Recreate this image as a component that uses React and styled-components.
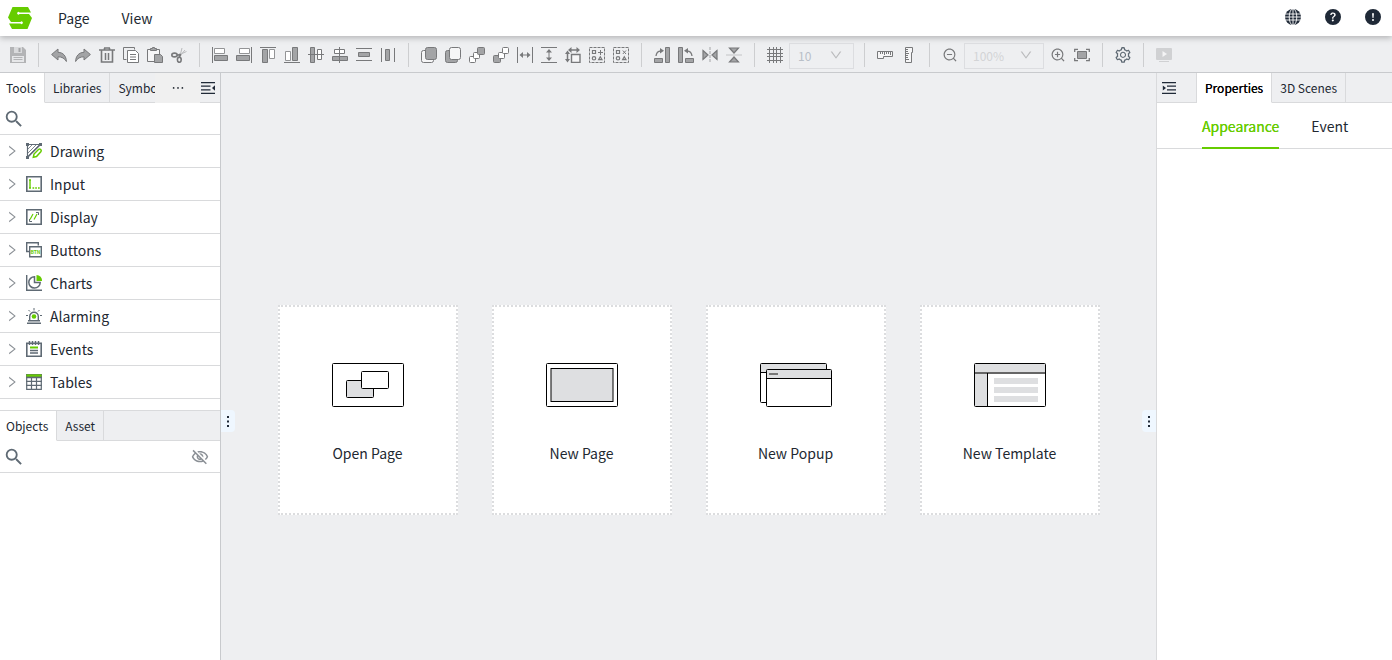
import React, { useState } from "react";
import styled, { createGlobalStyle } from "styled-components";
import {
  AiOutlineDown,
  AiOutlineEllipsis,
  AiOutlineRight,
  AiOutlineSetting,
  AiOutlineZoomIn,
  AiOutlineZoomOut
} from "react-icons/ai";
import { BsExclamationCircleFill, BsQuestionCircleFill } from "react-icons/bs";
import { MdOutlineVisibilityOff, MdSearch } from "react-icons/md";

const color = {
  green: "#6c0",
  panel: "#eeeff1",
  line: "#d9dadc",
  edge: "#c8cacd",
  navy: "#1f2937",
  text: "#222831",
  stroke: "#78797b",
  fill: "#a3a4a6",
  slate: "#5f6a74"
};

const GlobalStyle = createGlobalStyle`
  * {
    box-sizing: border-box;
  }
  html, body, #root {
    height: 100%;
  }
  body {
    margin: 0;
    overflow: hidden;
  }
  body, button, input, select {
    font-family: "Noto Sans CJK SC", "Noto Sans", sans-serif;
    font-weight: 400;
    color: ${color.text};
  }
  svg {
    display: block;
    flex: none;
  }
`;

const Page = styled.div`
  display: flex;
  flex-direction: column;
  height: 100%;
  background: ${color.panel};
`;

const Header = styled.header`
  position: relative;
  display: flex;
  align-items: center;
  flex: none;
  height: 36px;
  padding: 0 8px;
  background: #fff;
  box-shadow: 0 2px 6px rgba(0, 0, 0, 0.25);
`;

const Menu = styled.nav`
  display: flex;
  flex: 1;
  margin-left: 10px;
`;

const MenuButton = styled.button`
  padding: 0 16px;
  border: 0;
  background: none;
  font-size: 14px;
  line-height: 36px;
`;

const HeaderLinks = styled.div`
  display: flex;
  gap: 16px;
  padding-bottom: 2px;
  margin-right: -1px;
`;

const IconButton = styled.button`
  display: flex;
  align-items: center;
  justify-content: center;
  flex: none;
  width: 24px;
  height: 24px;
  padding: 0;
  border: 0;
  background: none;
  color: ${(p) => p.$color || color.stroke};
`;

const Toolbar = styled.div`
  display: flex;
  align-items: center;
  flex: none;
  height: 37px;
  padding: 2px 6px 0;
  border-bottom: 1px solid ${color.edge};
`;

const Separator = styled.span`
  width: 1px;
  height: 24px;
  margin: 0 8px;
  background: #cdced0;
`;

const SelectBox = styled.div`
  position: relative;
  width: ${(p) => p.$width}px;
  height: 26px;
  margin: 0 2px;

  select {
    width: 100%;
    height: 100%;
    padding: 0 28px 0 8px;
    border: 1px solid #dcdde0;
    background: transparent;
    color: ${(p) => p.$color};
    font-size: 12px;
    opacity: 1;
    appearance: none;
  }
  svg {
    position: absolute;
    top: 6px;
    right: 11px;
    color: #b9babc;
    pointer-events: none;
  }
`;

const Body = styled.div`
  display: flex;
  flex: 1;
  min-height: 0;
`;

const LeftPanel = styled.aside`
  flex: none;
  width: 221px;
  border-right: 1px solid ${color.edge};
  background: #fff;
`;

const RightPanel = styled.aside`
  flex: none;
  width: 236px;
  border-left: 1px solid ${color.line};
  background: #fff;
`;

const TabBar = styled.div`
  display: flex;
  height: ${(p) => (p.$topLine ? 31 : 30)}px;
  border-top: ${(p) => (p.$topLine ? `1px solid ${color.line}` : "0")};
  background: ${color.panel};
`;

const TabStrip = styled.div`
  display: flex;
  flex: 1;
  min-width: 0;
  overflow: hidden;
  box-shadow: inset 0 -1px ${color.line};
`;

const Tab = styled.button`
  flex: none;
  padding: 0 8px;
  border: 0;
  border-right: 1px solid ${color.line};
  border-bottom: 1px solid ${(p) => (p.$active ? "#fff" : color.line)};
  background: ${(p) => (p.$active ? "#fff" : color.panel)};
  color: ${(p) => (p.$active && p.$strong ? "#000" : color.text)};
  font-size: 12px;
  line-height: 28px;
  text-shadow: ${(p) => (p.$active && p.$strong ? "0 0 0 currentColor" : "none")};

  &:first-child {
    padding-left: ${(p) => (p.$strong ? 8 : 6)}px;
  }
`;

const MoreTabs = styled.button`
  display: flex;
  align-items: center;
  justify-content: center;
  width: 45px;
  border: 0;
  background: #f0f0f0;
`;

const FoldButton = styled.button`
  display: flex;
  align-items: center;
  width: ${(p) => p.$width}px;
  padding: 0 0 0 ${(p) => p.$indent || 0}px;
  border: 0;
  border-right: ${(p) => (p.$edge ? `1px solid ${color.line}` : "0")};
  border-bottom: 1px solid ${color.line};
  background: ${color.panel};
`;

const SearchRow = styled.label`
  display: flex;
  align-items: center;
  height: 32px;
  padding: 0 8px 0 3px;
  border-bottom: 1px solid ${color.line};

  input {
    flex: 1;
    min-width: 0;
    border: 0;
    outline: 0;
    background: none;
    font-size: 14px;
  }
`;

const ToolList = styled.ul`
  margin: 0 0 11px;
  padding: 0;
  list-style: none;
`;

const ToolRow = styled.li`
  border-bottom: 1px solid ${color.line};

  button {
    display: flex;
    align-items: center;
    width: 100%;
    height: 32px;
    padding: 0 5px;
    border: 0;
    background: none;
    font-size: 14px;
    text-align: left;
  }
  .arrow {
    color: #8b9096;
  }
  .icon {
    margin: 0 8px 0 7px;
  }
`;

const Workspace = styled.main`
  position: relative;
  display: flex;
  align-items: center;
  justify-content: center;
  flex: 1;
  gap: 34px;
  min-width: 0;
  padding-top: 86px;
`;

const Card = styled.button`
  display: flex;
  flex-direction: column;
  align-items: center;
  gap: 36px;
  width: 180px;
  height: 210px;
  padding: 56px 0 0;
  border: 2px dotted #dcdddf;
  background: #fff;
  font-size: 14px;
  line-height: 20px;
`;

const Handle = styled.button`
  position: absolute;
  top: 337px;
  ${(p) => p.$side}: 0;
  display: flex;
  align-items: center;
  justify-content: center;
  width: 14px;
  height: 22px;
  padding: 0;
  border: 0;
  border-radius: ${(p) => (p.$side === "left" ? "0 4px 4px 0" : "4px 0 0 4px")};
  background: #eff7ff;
`;

const SubTabs = styled.div`
  display: flex;
  gap: 32px;
  height: 46px;
  padding-left: 45px;
  border-bottom: 1px solid ${color.line};
`;

const SubTab = styled.button`
  height: 46px;
  padding: 2px 0 0;
  border: 0;
  border-bottom: 2px solid ${(p) => (p.$active ? color.green : "transparent")};
  background: none;
  color: ${(p) => (p.$active ? color.green : color.text)};
  font-size: 14px;
  text-shadow: ${(p) => (p.$active ? "0 0 0 currentColor" : "none")};
`;

const S = color.stroke;
const F = color.fill;

const Icon = ({ children, ...rest }) => (
  <svg width="16" height="16" viewBox="0 0 16 16" fill="none" stroke={S} {...rest}>
    {children}
  </svg>
);

const GroupShapes = ({ mark }) => (
  <>
    <rect x=".5" y=".5" width="15" height="15" strokeDasharray="3 1" />
    <path d="M3.5 3.5h3v3h-3z" strokeWidth="1.2" />
    <circle cx="5" cy="11.300" r="1.700" strokeWidth="1.2" />
    <path d="M11.300 9.700L13 12.700H9.600z" strokeWidth="1.2" />
    <path d={mark} />
  </>
);

const icons = {
  save: (
    <>
      <path d="M0 0h13l3 3v13H0z" fill="#b3b4b6" stroke="none" />
      <path d="M4 0h8v6H4z" fill="#d9dadc" stroke="none" />
      <path d="M8.500 1h2v4h-2z" fill="#a3a4a6" stroke="none" />
      <path d="M2 9h12v6H2z" fill="#e6e7e9" stroke="none" />
      <path d="M3.500 10.500h9M3.500 12.500h9" stroke="#b3b4b6" />
    </>
  ),
  undo: <path d="M.6 7.500L7 2v3.300c5.500.2 8.200 4 8.400 9.200C13.500 11.300 11 9.800 7 9.800V13z" fill={F} />,
  redo: <path d="M15.400 7.500L9 2v3.300C3.500 5.500.8 9.300.6 14.500 2.500 11.300 5 9.800 9 9.800V13z" fill={F} />,
  trash: (
    <>
      <path d="M0 3h16M5 1h6M5.500 1v2M10.500 1v2" strokeWidth="1.600" />
      <path d="M2.500 3v12h11V3" strokeWidth="1.600" />
      <path d="M6.500 6v7M9.500 6v7" strokeWidth="1.500" />
    </>
  ),
  copy: (
    <>
      <path d="M3.500 12.500h-3V.5h11v2" />
      <path d="M4.500 3.500h8l3 3v9h-11z" fill="#fff" />
      <path d="M7 7.500h6M7 10h6M7 12.500h6" />
    </>
  ),
  paste: (
    <>
      <path d="M7 14.500H.5v-12h12V7" fill="#f6f6f7" />
      <path d="M3.500 3.500v-2h2V.5h2v1h2v2z" fill={F} />
      <path d="M7.500 7.500h6l2 2v6h-8z" fill={F} />
    </>
  ),
  cut: (
    <>
      <ellipse cx="3.500" cy="8" rx="2.700" ry="1.900" strokeWidth="1.600" />
      <ellipse cx="8.300" cy="12.800" rx="1.900" ry="2.500" strokeWidth="1.600" />
      <path d="M6 8.500l4-1.500M8 10.500l2-3.500" strokeWidth="1.600" />
      <path d="M10 7l5.500-2.500M9.500 7l1.500-6M11 6.500L14 3" stroke="#b9babc" />
    </>
  ),
  alignLeft: (
    <>
      <path d="M.5 0v16" />
      <path d="M2.500 1.500h10v5h-10z" fill="#fff" stroke="#939496" />
      <path d="M2.500 8.500h13v5h-13z" fill={F} />
    </>
  ),
  alignRight: (
    <>
      <path d="M15.500 0v16" />
      <path d="M3.500 1.500h10v5h-10z" fill="#fff" stroke="#939496" />
      <path d="M.5 8.500h13v5H.5z" fill={F} />
    </>
  ),
  alignTop: (
    <>
      <path d="M0 .5h16" />
      <path d="M2.500 2.500h5v13h-5z" fill={F} />
      <path d="M9.500 2.500h5v9h-5z" fill="#fff" stroke="#939496" />
    </>
  ),
  alignBottom: (
    <>
      <path d="M0 15.500h16" />
      <path d="M1.500 4.500h5v9h-5z" fill="#fff" stroke="#939496" />
      <path d="M8.500 .5h5v13h-5z" fill={F} />
    </>
  ),
  alignMiddle: (
    <>
      <path d="M2.500 .5h4v15h-4z" fill={F} />
      <path d="M9.500 2.500h4v10h-4z" fill="#fff" />
      <path d="M0 7.500h16" />
    </>
  ),
  alignCenter: (
    <>
      <path d="M2.500 2.500h10v4h-10z" fill="#fff" />
      <path d="M.5 9.500h15v4H.5z" fill={F} />
      <path d="M7.500 0v16" />
    </>
  ),
  spreadV: (
    <>
      <path d="M0 1.500h16M0 13.500h16" />
      <path d="M2.500 5.500h11v4h-11z" fill={F} />
    </>
  ),
  spreadH: (
    <>
      <path d="M1.500 1v14M14.500 1v14" />
      <path d="M5.500 2.500h4v11h-4z" fill={F} />
    </>
  ),
  toFront: (
    <>
      <rect x=".5" y="3.500" width="12" height="12" rx="2" fill="#f6f6f7" />
      <rect x="4.500" y=".5" width="11" height="12" rx="2" fill={F} />
    </>
  ),
  toBack: (
    <>
      <rect x=".5" y="3.500" width="12" height="12" rx="2" fill={F} />
      <rect x="4.500" y=".5" width="11" height="12" rx="2" fill="#f6f6f7" />
    </>
  ),
  forward: (
    <>
      <rect x=".5" y="9.500" width="6" height="6" rx="1" fill="#fff" />
      <rect x="4.500" y="5.500" width="6" height="6" rx="1" fill="#fff" />
      <rect x="8.500" y=".5" width="7" height="7" rx="1" fill={F} />
    </>
  ),
  backward: (
    <>
      <rect x=".5" y="8.500" width="7" height="7" rx="1" fill={F} />
      <rect x="5.500" y="5.500" width="6" height="6" rx="1" fill="#fff" />
      <rect x="9.500" y=".5" width="6" height="6" rx="1" fill="#fff" />
    </>
  ),
  sameWidth: (
    <>
      <path d="M.5 0v16M15.500 0v16M4 8h8" />
      <path d="M2.500 8L6 5v6zM13.500 8L10 5v6z" fill={S} stroke="none" />
    </>
  ),
  sameHeight: (
    <>
      <path d="M0 .5h16M0 15.500h16M8 4v8" />
      <path d="M8 2L5 5.500h6zM8 14l-3-3.500h6z" fill={S} stroke="none" />
    </>
  ),
  sameSize: (
    <>
      <path d="M6.500 7.500h8.500v8H6.500z" fill="#f6f6f7" strokeWidth="1.400" />
      <path d="M5 3h8M2.500 6v7" strokeWidth="1.500" />
      <path d="M3 3l3.500-3v6zM15 3l-3.500-3v6zM2.500 3.500L0 7h5zM2.500 15.500L0 12h5z" fill={S} stroke="none" />
    </>
  ),
  group: <GroupShapes mark="M11.500 3v5M9 5.500h5" />,
  ungroup: <GroupShapes mark="M9.800 3.500l3.200 3.500M13 3.500L9.800 7" />,
  rotateRight: (
    <>
      <path d="M.5 11.500h8v4h-8zM11.500 .5h4v15h-4z" fill={F} />
      <path d="M2 9c.3-3 2-5 5-5.200" strokeWidth="1.300" />
      <path d="M6 1l4 2.800L6 6.600z" fill={S} stroke="none" />
    </>
  ),
  rotateLeft: (
    <>
      <path d="M7.500 11.500h8v4h-8zM.5 .5h4v15h-4z" fill={F} />
      <path d="M14 9c-.3-3-2-5-5-5.200" strokeWidth="1.300" />
      <path d="M10 1L6 3.800l4 2.800z" fill={S} stroke="none" />
    </>
  ),
  flipH: (
    <>
      <path d="M1 3.500L6 8l-5 4.500zM15 3.500L10 8l5 4.500z" fill={F} strokeWidth="1.200" />
      <path d="M8 0v16" strokeDasharray="3 1" stroke="#a3a4a6" />
    </>
  ),
  flipV: (
    <>
      <path d="M3.500 1L8 6l4.500-5zM3.500 15L8 10l4.500 5z" fill={F} strokeWidth="1.200" />
      <path d="M0 8h16" stroke="#c3c4c6" />
    </>
  ),
  grid: <path d="M2.500 0v16M6.500 0v16M9.500 0v16M13.500 0v16M0 2.500h16M0 6.500h16M0 9.500h16M0 13.500h16" />,
  rulerH: (
    <>
      <path d="M.5 4.500h15v5h-9v2h-6z" fill="#f6f6f7" />
      <path d="M3.500 5v2M5.500 5v2M7.500 5v3M9.500 5v2M11.500 5v2M13.500 5v3" />
    </>
  ),
  rulerV: (
    <>
      <path d="M4.500 .5h7v5h-1v10h-6z" fill="#f6f6f7" />
      <path d="M5 2.500h2M5 4.500h2M5 6.500h3M5 8.500h2M5 10.500h2M5 12.500h3" />
    </>
  ),
  fit: (
    <>
      <path d="M.7 5V2.300H4M12 2.300h3.300V5M15.300 11v2.700H12M4 13.700H.7V11" strokeWidth="1.300" />
      <path d="M3.500 4.500h9v7h-9z" fill={F} />
    </>
  ),
  preview: (
    <>
      <rect y="1" width="16" height="12" rx="1" fill="#d0d1d3" stroke="none" />
      <path d="M6.500 4v6L11 7z" fill="#f4f4f5" stroke="none" />
      <path d="M3 14.500h10" stroke="#d0d1d3" />
    </>
  )
};

const toolbar = [
  ["save"],
  ["undo", "redo", "trash", "copy", "paste", "cut"],
  [
    "alignLeft",
    "alignRight",
    "alignTop",
    "alignBottom",
    "alignMiddle",
    "alignCenter",
    "spreadV",
    "spreadH"
  ],
  [
    "toFront",
    "toBack",
    "forward",
    "backward",
    "sameWidth",
    "sameHeight",
    "sameSize",
    "group",
    "ungroup"
  ],
  ["rotateRight", "rotateLeft", "flipH", "flipV"]
];

const G = color.green;
const D = color.slate;

const tools = [
  {
    name: "Drawing",
    icon: (
      <>
        <path d="M1.500 1.500h13M1.500 1.500v13l13-13" strokeWidth="1.200" />
        <path d="M2 6l4-4M2 10l8-8M2 13l11-11" strokeWidth=".8" />
        <path d="M0 0h3v3H0zM13 0h3v3h-3zM0 13h3v3H0z" fill={D} stroke="none" />
        <path d="M7.300 14.300l.7-3.300 4.500-4.500c1.500-1.200 3.500.5 2.300 2.200L10.500 13.500z" stroke={G} strokeWidth="1.500" fill="#fff" />
      </>
    )
  },
  {
    name: "Input",
    icon: (
      <>
        <path d="M.8 .8h14.400v14.400H.8z" strokeWidth="1.600" />
        <path d="M3 4h2M4 4v8M3 12h2" stroke={G} strokeWidth="1.400" />
        <path d="M6.500 12h1.700M9.200 12h1.700M12 12h1.700" stroke={G} strokeWidth="1.700" />
      </>
    )
  },
  {
    name: "Display",
    icon: (
      <>
        <path d="M.8 .8h14.400v14.400H.8z" strokeWidth="1.600" />
        <path d="M10 3.500h2.500V6M3.500 10v2.500H6" />
        <path d="M4 10.500l3-5.500M8 10.500l3-5.500" stroke={G} strokeWidth="1.200" />
      </>
    )
  },
  {
    name: "Buttons",
    icon: (
      <>
        <path d="M3 9.500H.7V.7h11.600V3.500" strokeWidth="1.400" />
        <path d="M3.700 4.700h11.600v10H3.700z" fill="#fff" strokeWidth="1.400" />
        <text x="9.500" y="11.500" fontSize="5" fontWeight="700" textAnchor="middle" fill={G} stroke="none">
          BTN
        </text>
      </>
    )
  },
  {
    name: "Charts",
    icon: (
      <>
        <path d="M.7 0v15.300H16" strokeWidth="1.400" />
        <path d="M8.500 1.700A5.700 5.700 0 1 0 14.200 7.500H8.500z" strokeWidth="1.500" />
        <path d="M10.500 0A5.500 5.500 0 0 1 16 6h-5.500z" fill={G} stroke="none" />
      </>
    )
  },
  {
    name: "Alarming",
    icon: (
      <>
        <path d="M3.700 12.500V8.500a4.300 4.300 0 0 1 8.600 0v4" strokeWidth="1.400" />
        <path d="M2 12.700h12M1 15.300h14" strokeWidth="1.400" />
        <path d="M8 0v2.500M2.500 2l1.500 1.500M13.500 2L12 3.500M0 7.500h2M14 7.500h2" />
        <circle cx="8" cy="8.500" r="2.300" fill={G} stroke="none" />
      </>
    )
  },
  {
    name: "Events",
    icon: (
      <>
        <path d="M.8 2.300h14.400v12.900H.8z" strokeWidth="1.600" />
        <path d="M3.500 0v4M6.500 0v4M9.500 0v4M12.500 0v4" strokeWidth="1.500" />
        <path d="M4 6.500h8" stroke={G} strokeWidth="2" />
        <path d="M4 9.500h8M4 12h8" strokeWidth="1.400" />
      </>
    )
  },
  {
    name: "Tables",
    icon: (
      <>
        <path d="M.7 3v12.300h14.600V3M0 7.300h16M0 11.300h16M5.500 4v12M10.500 4v12M0 3.700h16" strokeWidth="1.200" />
        <path d="M0 0h16v3H0z" fill={G} stroke={D} strokeWidth=".8" />
      </>
    )
  }
];

const cards = [
  {
    name: "Open Page",
    art: (
      <>
        <rect x=".5" y=".5" width="71" height="43" rx="1" />
        <rect x="14.500" y="17.500" width="27" height="17" rx="1" fill="#dedfe1" />
        <rect x="29.500" y="8.500" width="27" height="17" rx="1" fill="#fff" />
      </>
    )
  },
  {
    name: "New Page",
    art: (
      <>
        <rect x=".5" y=".5" width="71" height="43" rx="1" />
        <rect x="5" y="5.500" width="62" height="33" fill="#dedfe1" />
      </>
    )
  },
  {
    name: "New Popup",
    art: (
      <>
        <rect x=".5" y=".5" width="66" height="39" rx="1" fill="#fff" />
        <path d="M1 1h65v8H1z" fill="#dedfe1" stroke="none" />
        <path d="M0 9.500h66" />
        <rect x="6.500" y="6.500" width="65" height="37" rx="1" fill="#fff" />
        <path d="M7 7h64v8H7z" fill="#dedfe1" stroke="none" />
        <path d="M7 15.500h64" />
        <path d="M9 11h9" stroke="#777" strokeWidth="2" />
      </>
    )
  },
  {
    name: "New Template",
    art: (
      <>
        <path d="M1 1h70v9H1zM1 10h12v33H1zM20 15h44v6H20zM20 24h44v6H20zM20 33h44v6H20z" fill="#dedfe1" stroke="none" />
        <path d="M1 10h70" stroke="#666" strokeWidth="2" />
        <path d="M13.500 10v33" />
        <rect x=".5" y=".5" width="71" height="43" rx="1" />
      </>
    )
  }
];

const Logo = () => (
  <svg width="24" height="22" viewBox="0 0 24 22">
    <path
      d="M4.500 0H20l3 5.500H11.500a1.300 1.300 0 1 0 0 1.500H21l3 4-4.500 11H4L1 16.500h11.500a1.300 1.300 0 1 0 0-1.500H3L0 10.500z"
      fill={color.green}
    />
  </svg>
);

const Globe = () => (
  <svg width="16" height="16" viewBox="0 0 16 16" fill="none" stroke="#fff" strokeWidth=".9">
    <circle cx="8" cy="8" r="8" fill={color.navy} stroke="none" />
    <ellipse cx="8" cy="8" rx="3.800" ry="8.200" />
    <path d="M8 0v16M0 5h16M0 11h16M0 8h16" />
  </svg>
);

const Fold = ({ flip }) => (
  <svg width="14" height="12" viewBox="0 0 14 12" stroke={color.navy} strokeWidth="1.300">
    <path d="M0 .7h14M0 11.300h14" />
    <path d={flip ? "M5 4.200h9M5 7.800h9" : "M0 4.200h9.500M0 7.800h9.500"} />
    <path d={flip ? "M.8 3.500L4 6 .8 8.500z" : "M14 3.200L11 6l3 2.800z"} fill={color.navy} stroke="none" />
  </svg>
);

const Dots = () => (
  <svg width="2" height="11" viewBox="0 0 2 11" fill={color.navy}>
    <path d="M0 0h2v2H0zM0 4.500h2v2H0zM0 9h2v2H0z" />
  </svg>
);

const Dropdown = ({ label, value, width, tint }) => (
  <SelectBox $width={width} $color={tint}>
    <select aria-label={label} defaultValue={value} disabled>
      <option>{value}</option>
    </select>
    <AiOutlineDown size={14} />
  </SelectBox>
);

const Tool = ({ name }) => (
  <IconButton aria-label={name}>
    <Icon>{icons[name]}</Icon>
  </IconButton>
);

const App = () => {
  const [leftTab, setLeftTab] = useState("Tools");
  const [treeTab, setTreeTab] = useState("Objects");
  const [rightTab, setRightTab] = useState("Properties");
  const [subTab, setSubTab] = useState("Appearance");

  return (
    <Page>
      <GlobalStyle />
      <Header>
        <Logo />
        <Menu>
          <MenuButton>Page</MenuButton>
          <MenuButton>View</MenuButton>
        </Menu>
        <HeaderLinks>
          <IconButton aria-label="Language">
            <Globe />
          </IconButton>
          <IconButton aria-label="Help" $color={color.navy}>
            <BsQuestionCircleFill size={16} />
          </IconButton>
          <IconButton aria-label="About" $color={color.navy}>
            <BsExclamationCircleFill size={16} />
          </IconButton>
        </HeaderLinks>
      </Header>

      <Toolbar>
        {toolbar.map((names) => (
          <React.Fragment key={names[0]}>
            {names.map((name) => (
              <Tool key={name} name={name} />
            ))}
            <Separator />
          </React.Fragment>
        ))}
        <Tool name="grid" />
        <Dropdown label="Grid size" value="10" width={65} tint="#b9bfc8" />
        <Separator />
        <Tool name="rulerH" />
        <Tool name="rulerV" />
        <Separator />
        <IconButton aria-label="Zoom out">
          <AiOutlineZoomOut size={16} />
        </IconButton>
        <Dropdown label="Zoom" value="100%" width={80} tint="#d3d4d6" />
        <IconButton aria-label="Zoom in">
          <AiOutlineZoomIn size={16} />
        </IconButton>
        <Tool name="fit" />
        <Separator />
        <IconButton aria-label="Settings" $color={color.slate}>
          <AiOutlineSetting size={18} />
        </IconButton>
        <Separator />
        <Tool name="preview" />
      </Toolbar>

      <Body>
        <LeftPanel>
          <TabBar>
            <TabStrip>
              {["Tools", "Libraries", "Symbols"].map((t) => (
                <Tab key={t} $active={t === leftTab} onClick={() => setLeftTab(t)}>
                  {t}
                </Tab>
              ))}
            </TabStrip>
            <MoreTabs aria-label="More tabs">
              <AiOutlineEllipsis size={16} />
            </MoreTabs>
            <FoldButton aria-label="Fold left panel" $width={20} $indent={1}>
              <Fold />
            </FoldButton>
          </TabBar>
          <SearchRow>
            <MdSearch size={22} color={color.slate} />
            <input aria-label="Search tools" />
          </SearchRow>
          <ToolList>
            {tools.map(({ name, icon }) => (
              <ToolRow key={name}>
                <button>
                  <AiOutlineRight className="arrow" size={14} />
                  <Icon className="icon" stroke={D}>
                    {icon}
                  </Icon>
                  {name}
                </button>
              </ToolRow>
            ))}
          </ToolList>
          <TabBar $topLine>
            <TabStrip>
              {["Objects", "Asset"].map((t) => (
                <Tab key={t} $active={t === treeTab} onClick={() => setTreeTab(t)}>
                  {t}
                </Tab>
              ))}
            </TabStrip>
          </TabBar>
          <SearchRow>
            <MdSearch size={22} color={color.slate} />
            <input aria-label="Search objects" />
            <IconButton aria-label="Show hidden" $color="#8b9096">
              <MdOutlineVisibilityOff size={18} />
            </IconButton>
          </SearchRow>
        </LeftPanel>

        <Workspace>
          <Handle $side="left" aria-label="Left panel">
            <Dots />
          </Handle>
          {cards.map(({ name, art }) => (
            <Card key={name}>
              <svg width="72" height="44" viewBox="0 0 72 44" fill="none" stroke="#000">
                {art}
              </svg>
              {name}
            </Card>
          ))}
          <Handle $side="right" aria-label="Right panel">
            <Dots />
          </Handle>
        </Workspace>

        <RightPanel>
          <TabBar>
            <FoldButton aria-label="Fold right panel" $width={40} $indent={5} $edge>
              <Fold flip />
            </FoldButton>
            <TabStrip>
              {["Properties", "3D Scenes"].map((t) => (
                <Tab key={t} $strong $active={t === rightTab} onClick={() => setRightTab(t)}>
                  {t}
                </Tab>
              ))}
            </TabStrip>
          </TabBar>
          <SubTabs>
            {["Appearance", "Event"].map((t) => (
              <SubTab key={t} $active={t === subTab} onClick={() => setSubTab(t)}>
                {t}
              </SubTab>
            ))}
          </SubTabs>
        </RightPanel>
      </Body>
    </Page>
  );
};

export default App;
